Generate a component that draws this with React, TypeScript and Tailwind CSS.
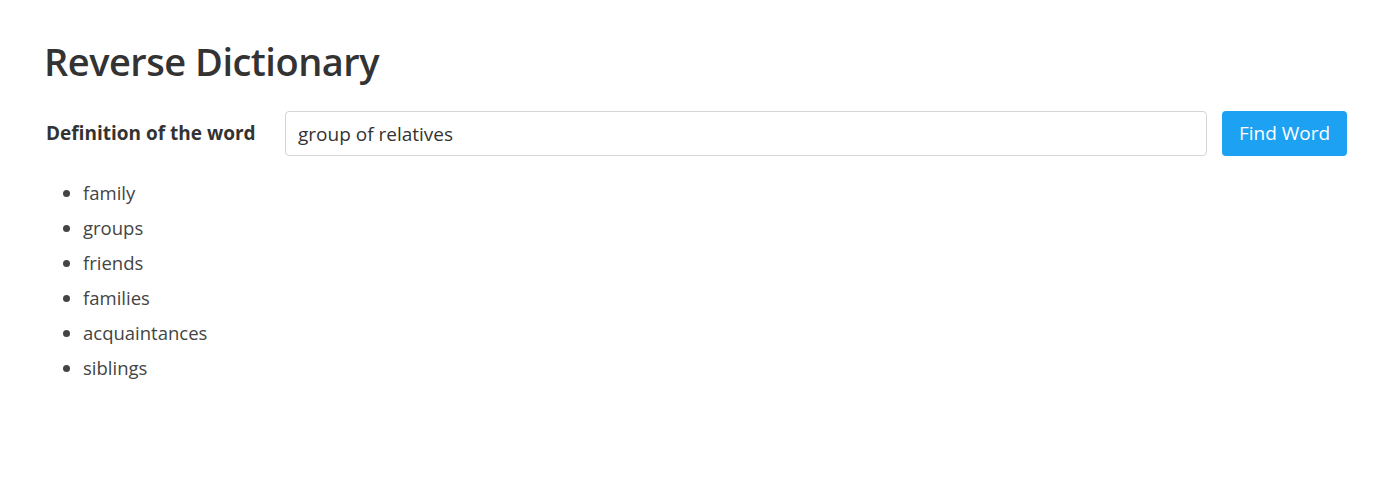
import React from "react";

const words = ["family", "groups", "friends", "families", "acquaintances", "siblings"];

export default function App() {
  return (
    <div className="min-h-[492px] bg-white pl-[44px] pr-[49px] pt-[38px] text-[#333333]" style={{ fontFamily: '"Open Sans", "Noto Sans", sans-serif' }}>
      <h1 className="m-0 text-[38px] font-semibold leading-[46px] tracking-[-0.5px]">Reverse Dictionary</h1>
      <div className="mt-[27px] flex items-center">
        <label className="w-[241px] shrink-0 pl-[2px] text-[19px] font-bold">Definition of the word</label>
        <input
          className="h-[45px] flex-1 rounded-[4px] border border-[#d5d5d5] px-[12px] text-[19px] text-[#333333] outline-none"
          defaultValue="group of relatives"
        />
        <button className="ml-[15px] h-[45px] w-[125px] rounded-[4px] bg-[#1da1f2] text-[19px] text-white">Find Word</button>
      </div>
      <ul className="mt-[19px] list-disc pl-[39px] text-[18.5px] text-[#444444]">
        {words.map((w) => (
          <li key={w} className="h-[35px] leading-[35px]">{w}</li>
        ))}
      </ul>
    </div>
  );
}
